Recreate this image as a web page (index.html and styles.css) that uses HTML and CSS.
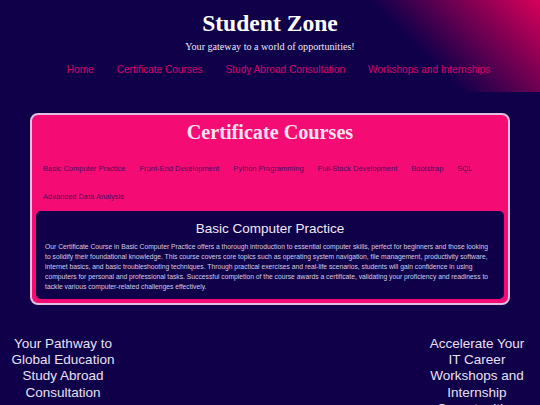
FILE: index.html
```html
<!DOCTYPE html>
<html lang="en">
<head>
  <meta charset="UTF-8" />
  <meta name="viewport" content="width=device-width, initial-scale=1.0" />
  <title>Student Zone</title>
  <link rel="stylesheet" href="styles.css">
</head>
<body>

<header class="topo">
  <h1>Student Zone</h1>
  <p>Your gateway to a world of opportunities!</p>
  <nav class="menu">
    <a href="#">Home</a>
    <a href="#">Certificate Courses</a>
    <a href="#">Study Abroad Consultation</a>
    <a href="#">Workshops and Internships</a>
  </nav>
</header>

<section class="cursos">
  <h2>Certificate Courses</h2>
  <div class="abas">
    <a href="#">Basic Computer Practice</a>
    <a href="#">Front-End Development</a>
    <a href="#">Python Programming</a>
    <a href="#">Full-Stack Development</a>
    <a href="#">Bootstrap</a>
    <a href="#">SQL</a>
    <a href="#">Advanced Data Analysis</a>
  </div>
  <div class="painel">
    <h3>Basic Computer Practice</h3>
    <p>Our Certificate Course in Basic Computer Practice offers a thorough introduction to essential computer skills, perfect for beginners and those looking to solidify their foundational knowledge. This course covers core topics such as operating system navigation, file management, productivity software, internet basics, and basic troubleshooting techniques. Through practical exercises and real-life scenarios, students will gain confidence in using computers for personal and professional tasks. Successful completion of the course awards a certificate, validating your proficiency and readiness to tackle various computer-related challenges effectively.</p>
  </div>
</section>

<section class="chamadas">
  <div class="chamada">Your Pathway to Global Education<br>Study Abroad Consultation</div>
  <div class="chamada">Accelerate Your IT Career<br>Workshops and Internship Opportunities</div>
</section>

</body>
</html>
```

FILE: styles.css
```css
html, body {
  height: 100%;
  overflow: hidden;
}
body {
  margin: 0;
  background: #10004a;
  color: white;
  font-family: 'Liberation Sans', Arial, sans-serif;
}
.topo {
  height: 92px;
  padding-top: 9px;
  box-sizing: border-box;
  text-align: center;
  background: linear-gradient(45deg, #10004a 73%, #d8005a 100%);
}
.topo h1 {
  margin: 0;
  font-family: 'Liberation Serif', serif;
  font-size: 23.6px;
  line-height: 28px;
}
.topo p {
  margin: 3px 0 0;
  font-family: 'Liberation Serif', serif;
  font-size: 10.1px;
  line-height: 14px;
  color: #eeeaf5;
}
.menu {
  display: flex;
  justify-content: center;
  gap: 23px;
  margin-top: 9px;
  padding-left: 17px;
}
.menu a {
  color: #d6006a;
  font-size: 10.1px;
  line-height: 14px;
  text-decoration: none;
}
.cursos {
  margin: 21px 30px 0;
  height: 192px;
  box-sizing: border-box;
  padding: 0 4px 4px;
  background: #f50b74;
  border: 2px solid #e0bfe0;
  border-radius: 8px;
  display: flex;
  flex-direction: column;
}
.cursos h2 {
  margin: 4px 0 0;
  font-family: 'Liberation Serif', serif;
  font-size: 20.2px;
  line-height: 26px;
  text-align: center;
  color: #fde4f0;
}
.abas {
  display: flex;
  flex-wrap: wrap;
  column-gap: 14px;
  padding: 0 7px;
  margin-top: 10px;
}
.abas a {
  font-size: 7.5px;
  line-height: 28px;
  color: #520a5c;
  text-decoration: none;
}
.painel {
  margin-top: auto;
  height: 90px;
  box-sizing: border-box;
  padding: 9px 9px 0;
  background: #10004a;
  border-radius: 5px;
}
.painel h3 {
  margin: 0;
  font-size: 13.5px;
  font-weight: normal;
  line-height: 17px;
  text-align: center;
  color: #f0ecf8;
}
.painel p {
  margin: 5px 0 0;
  font-size: 6.75px;
  line-height: 10px;
  color: #d4cee4;
}
.chamadas {
  display: flex;
  justify-content: space-between;
  margin-top: 31px;
  padding: 0 9px;
}
.chamada {
  width: 108px;
  font-size: 13.5px;
  line-height: 16.2px;
  text-align: center;
  color: #e6e2f2;
}
```
